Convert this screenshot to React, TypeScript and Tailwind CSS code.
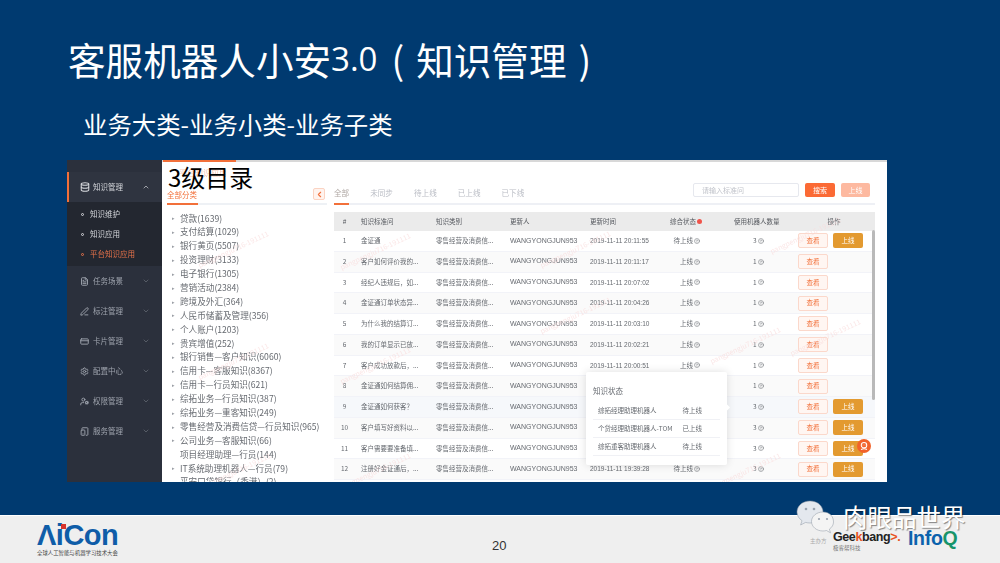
import React from "react"
import { ChevronUp, ChevronDown, ChevronLeft, Database, FileText, PenLine, CreditCard, Settings, UserCog, TabletSmartphone, CircleHelp } from "lucide-react"

const cjk = "font-['Noto_Sans_CJK_SC','Noto_Sans',sans-serif]"

const menus = [
    { name: "任务场景", icon: FileText },
    { name: "标注管理", icon: PenLine },
    { name: "卡片管理", icon: CreditCard },
    { name: "配置中心", icon: Settings },
    { name: "权限管理", icon: UserCog },
    { name: "服务管理", icon: TabletSmartphone },
]

const subMenus = ["知识维护", "知识应用", "平台知识应用"]

const tree = [
    "贷款(1639)", "支付结算(1029)", "银行黄页(5507)", "投资理财(3133)", "电子银行(1305)", "营销活动(2384)", "跨境及外汇(364)",
    "人民币储蓄及管理(356)", "个人账户(1203)", "贵宾增值(252)", "银行销售—客户知识(6060)", "信用卡—客服知识(8367)",
    "信用卡—行员知识(621)", "综拓业务—行员知识(387)", "综拓业务—重客知识(249)", "零售经营及消费信贷—行员知识(965)",
    "公司业务—客服知识(66)", "项目经理助理—行员(144)", "IT系统助理机器人—行员(79)", "平安口袋银行（香港）(2)",
]

const tabs = ["全部", "未同步", "待上线", "已上线", "已下线"]

const rows = [
    { q: "金证通", time: "20:11:55", status: "待上线", count: 3, online: true },
    { q: "客户如何评价我的...", time: "20:11:17", status: "上线", count: 1, online: false },
    { q: "经纪人违规后，如...", time: "20:07:02", status: "上线", count: 1, online: false },
    { q: "金证通订单状态异...", time: "20:04:26", status: "上线", count: 1, online: false },
    { q: "为什么我的结算订...", time: "20:03:10", status: "上线", count: 1, online: false },
    { q: "我的订单显示已放...", time: "20:02:21", status: "上线", count: 1, online: false },
    { q: "客户成功放款后，...", time: "20:00:51", status: "上线", count: 1, online: false },
    { q: "金证通如何结算佣...", time: "", status: "", count: 1, online: false },
    { q: "金证通如何获客？", time: "", status: "", count: 3, online: true },
    { q: "客户填写好资料以...", time: "", status: "", count: 3, online: true },
    { q: "客户需要要准备填...", time: "", status: "", count: 3, online: true },
    { q: "注册好金证通后，...", time: "19:39:28", status: "待上线", count: 3, online: true },
]

const robots = [
    { name: "综拓经理助理机器人", status: "待上线" },
    { name: "个贷经理助理机器人-TOM", status: "已上线" },
    { name: "综拓重客助理机器人", status: "待上线" },
]

const marks = [
    "left-[128px] top-[84px]", "left-[128px] top-[196px]", "left-[270px] top-[86px]", "left-[470px] top-[150px]",
    "left-[470px] top-[84px]", "left-[270px] top-[200px]", "left-[700px] top-[70px]", "left-[640px] top-[180px]",
    "left-[270px] top-[306px]", "left-[640px] top-[306px]", "left-[720px] top-[172px]", "left-[130px] top-[306px]",
]

const gridCols = "grid grid-cols-[21px_75px_75px_80px_79px_65px_64px_82px]"

function Sidebar(){
    return(
        <div className="flex w-[95px] shrink-0 flex-col bg-[#2b303c] pt-[12px] text-[7.5px] text-[#9ea3ad]">
            <div className="flex h-[30px] items-center border-l-2 border-[#f2703a] bg-[#2f3440] pl-[11px] pr-[12px] text-[#d5d7db]">
                <Database size={10} strokeWidth={2.5} />
                <span className="ml-[3px] flex-1">知识管理</span>
                <ChevronUp size={8} />
            </div>
            <div className="flex h-[64px] flex-col justify-around bg-[#232730] py-[2px] pl-[24px] text-[#d5d7db]">
                {subMenus.map((sub,i)=>(
                    <div key={'sub'+i} className={i === 2 ? "flex items-center text-[#e8734a]" : "flex items-center"}>
                        <span className={i === 2 ? "mr-[6px] -ml-[10px] size-[3px] rounded-full border border-[#e8734a]" : "mr-[6px] -ml-[10px] size-[3px] rounded-full border border-[#d5d7db]"}></span>
                        {sub}
                    </div>
                ))}
            </div>
            {menus.map((menu,i)=>{
                const Icon = menu.icon
                return(
                    <div key={'menu'+i} className="flex h-[30px] items-center pl-[13px] pr-[12px]">
                        <Icon size={9} strokeWidth={2.5} />
                        <span className="ml-[4px] flex-1">{menu.name}</span>
                        <ChevronDown size={8} className="text-[#6d727c]" />
                    </div>
                )
            })}
        </div>
    )
}

function TreePanel(){
    return(
        <div className="flex w-[171px] shrink-0 flex-col pl-[5px] pr-[6px]">
            <div className="flex h-[43px] items-end justify-between border-b-2 border-[#eef1f5]">
                <span className="-mb-[2px] border-b-2 border-[#f2703a] pb-[3px] pr-[1px] text-[7.5px] text-[#f2703a]">全部分类</span>
                <span className="mb-[3px] mr-[2px] flex size-[12px] items-center justify-center rounded-[2px] border border-[#fbd3c2] bg-[#fff3ee] text-[#f2703a]">
                    <ChevronLeft size={9} strokeWidth={3} />
                </span>
            </div>
            <div className="mt-[6px] flex h-[271px] flex-col overflow-hidden text-[8.6px] text-[#666a70]">
                {tree.map((item,i)=>(
                    <div key={'tree'+i} className="flex h-[13.9px] shrink-0 items-center whitespace-nowrap">
                        <span className="w-[13px] pl-[5px] text-[5px] text-[#9a9ea5]">{i === 17 || i === 19 ? "" : "▸"}</span>
                        {item}
                    </div>
                ))}
            </div>
        </div>
    )
}

function TopBar(){
    return(
        <div className="flex h-[43px] items-end justify-between border-b-2 border-[#eef0f5]">
            <div className="flex gap-[21px] text-[7.6px] text-[#b9bcc4]">
                {tabs.map((tab,i)=>(
                    <span key={'tab'+i} className={i === 0 ? "-mb-[2px] border-b-2 border-[#f2703a] pb-[5px] text-[#b0a8a4]" : "pb-[5px]"}>{tab}</span>
                ))}
            </div>
            <div className="mb-[6px] mr-[5px] flex items-center text-[7px]">
                <div className="flex h-[14px] w-[106px] items-center rounded-[2px] border border-[#e6e8ee] pl-[8px] text-[#c0c3ca]">请输入标准问</div>
                <div className="ml-[6px] flex h-[14px] w-[30px] items-center justify-center rounded-[2px] bg-[#fb6a35] text-white">搜索</div>
                <div className="ml-[6px] flex h-[14px] w-[29px] items-center justify-center rounded-[2px] bg-[#fdb9a0] text-white">上线</div>
            </div>
        </div>
    )
}

function KnowledgeTable(){
    return(
        <div className="mt-[7px] text-[6.5px] text-[#666a70]">
            <div className={gridCols + " h-[19px] items-center bg-[#ebebeb] text-[#55585e]"}>
                <span className="text-center">#</span>
                <span className="pl-[6px]">知识标准问</span>
                <span className="pl-[6px]">知识类别</span>
                <span className="pl-[5px]">更新人</span>
                <span className="pl-[5px]">更新时间</span>
                <span className="flex items-center gap-[1px] pl-[6px]">综合状态<span className="size-[5px] rounded-full bg-[#f0534a]"></span></span>
                <span className="pl-[5px]">使用机器人数量</span>
                <span className="text-center">操作</span>
            </div>
            {rows.map((row,i)=>(
                <div key={'row'+i} className={gridCols + (i === 8 ? " h-[20.75px] items-center border-b border-[#f2f3f8] bg-[#f6f8fb]" : i % 2 === 1 ? " h-[20.75px] items-center border-b border-[#f2f3f8] bg-[#fafafa]" : " h-[20.75px] items-center border-b border-[#f2f3f8]")}>
                    <span className="text-center">{i + 1}</span>
                    <span className="whitespace-nowrap pl-[6px]">{row.q}</span>
                    <span className="whitespace-nowrap pl-[6px]">零售经营及消费信...</span>
                    <span className="pl-[5px] font-['Liberation_Sans',sans-serif] text-[7px]">WANGYONGJUN953</span>
                    <span className="whitespace-nowrap pl-[5px] font-['Liberation_Sans',sans-serif] text-[6.5px]">{row.time ? "2019-11-11 " + row.time : ""}</span>
                    {row.status ?
                        <span className="flex items-center justify-end gap-[1px] pr-[29px]">{row.status}<CircleHelp size={6} /></span>
                    : <span></span>}
                    <span className="flex items-center gap-[1px] pl-[24px]">{row.count}<CircleHelp size={6} /></span>
                    <span className="flex items-center gap-[5px] pl-[5px]">
                        <span className="flex h-[15px] w-[30px] items-center justify-center rounded-[2px] border border-[#fbd8cb] bg-[#fff6f2] text-[#f2703a]">查看</span>
                        {row.online ? <span className="flex h-[15px] w-[30px] items-center justify-center rounded-[2px] bg-[#e39a30] text-white">上线</span> : null}
                    </span>
                </div>
            ))}
        </div>
    )
}

function StatusPopover(){
    return(
        <div className="absolute left-[519px] top-[212px] flex h-[93px] w-[141px] flex-col rounded-[2px] bg-white px-[7px] pt-[13px] text-[6.5px] text-[#666a70] shadow-[0_0_8px_rgba(0,0,0,0.13)] blur-[0.35px]">
            <span className="mb-[6px] text-[7.5px]">知识状态</span>
            {robots.map((robot,i)=>(
                <div key={'robot'+i} className="flex h-[18px] shrink-0 items-center justify-between border-b border-[#f0f1f5] pl-[5px] pr-[18px]">
                    <span>{robot.name}</span>
                    <span>{robot.status}</span>
                </div>
            ))}
            <span className="absolute -right-[2px] top-[33px] size-[5px] rotate-45 bg-white"></span>
        </div>
    )
}

function ScreenPanel(){
    return(
        <div className={"relative mx-[67px] flex h-[322px] w-[820px] shrink-0 overflow-hidden " + cjk}>
            <div className="flex flex-1 blur-[0.35px]">
                <Sidebar />
                <div className="flex flex-1 border-t-2 border-[#d8d8d8] bg-white">
                    <TreePanel />
                    <div className="flex-1 pl-[1px] pr-[12px]">
                        <TopBar />
                        <KnowledgeTable />
                    </div>
                </div>
            </div>
            <div className="absolute left-[96px] top-0 h-[2px] w-[73px] bg-[#f2703a]"></div>
            <div className="absolute left-[805px] top-[70px] h-[170px] w-[3px] rounded-full bg-[#b9b9b9]"></div>
            <div className="absolute left-[112px] top-[7px] text-[8px] text-[#f8c4b0] blur-[0.35px]">平台知识应用</div>
            <div className="absolute left-[101px] top-[0px] text-[24px] leading-[34px] text-black">3级目录</div>
            <StatusPopover />
            {marks.map((pos,i)=>(
                <span key={'mark'+i} className={"pointer-events-none absolute -rotate-[25deg] whitespace-nowrap text-[7px] text-[#f9dcdc] opacity-70 " + pos}>pangpengju716-191111</span>
            ))}
            <div className="absolute left-[790px] top-[279px] flex size-[14px] items-center justify-center rounded-full bg-[#f2622a]">
                <svg viewBox="0 0 14 14" className="size-[12px]" fill="none" stroke="#fff" strokeWidth="1.2">
                    <circle cx="7" cy="6" r="3.2" />
                    <path d="M5.500 5.800h.6M7.900 5.800h.6" />
                    <path d="M3.500 11c2-1 5-1 7 0" />
                </svg>
            </div>
        </div>
    )
}

function WechatMark(){
    return(
        <svg viewBox="0 0 40 36" className="absolute left-[796px] top-[500px] h-[36px] w-[40px]">
            <path d="M14 1C6.500 1 1 6 1 12c0 3.600 2 6.600 5 8.700L4.600 25l5-2.600c1.400.4 2.800.6 4.400.6 7.500 0 13-5 13-11S21.500 1 14 1z" fill="#e4e8ee" stroke="#8d96a3" strokeWidth=".5" />
            <path d="M27 12c-6.500 0-11.500 4.300-11.500 9.500S20.500 31 27 31c1.200 0 2.400-.2 3.500-.5l4 2.300-1.100-3.700c2.600-1.700 4.100-4.300 4.100-7.100C37.500 16.300 33.500 12 27 12z" fill="#f4f4f4" stroke="#8d96a3" strokeWidth=".5" />
            <circle cx="10" cy="9" r="1.300" fill="#9aa3af" />
            <circle cx="18" cy="9" r="1.300" fill="#9aa3af" />
            <circle cx="23" cy="19" r="1.100" fill="#9aa3af" />
            <circle cx="31" cy="19" r="1.100" fill="#9aa3af" />
        </svg>
    )
}

function Footer(){
    return(
        <div className="relative mt-auto flex h-[48px] items-center border-t border-[#ffffff] bg-[#efefef] pl-[37px]">
            <div className="flex w-[81px] flex-col items-start">
                <span className="relative font-['Liberation_Sans',sans-serif] text-[29px] font-bold leading-[27px] tracking-[-0.5px] text-[#0f5da8]">
                    ΛiCon
                    <span className="absolute left-[23.5px] top-[2.5px] size-[5px] bg-[#d8342c]"></span>
                </span>
                <span className={"whitespace-nowrap text-[5.4px] leading-[9px] text-[#444] " + cjk}>全球人工智能与机器学习技术大会</span>
            </div>
            <span className="absolute left-[492px] top-[22px] font-['Liberation_Sans',sans-serif] text-[13px] leading-[16px] text-[#333]">20</span>
            <span className={"absolute left-[810px] top-[21px] text-[5.5px] text-[#aaa] " + cjk}>主办方</span>
            <div className="absolute left-[833px] top-[14px] flex flex-col">
                <span className="font-['Liberation_Sans',sans-serif] text-[12.500px] font-bold leading-[15px] tracking-[-0.4px] text-[#222]">
                    Gee<span className="text-[#e8531f]">k</span>bang<span className="text-[#e8531f]">&gt;.</span>
                </span>
                <span className={"text-[5.5px] leading-[7px] text-[#777] " + cjk}>极客帮科技</span>
            </div>
            <span className="absolute left-[908px] top-[10px] font-['Liberation_Sans',sans-serif] text-[19.500px] font-bold leading-[24px] tracking-[-0.3px] text-[#0c62ad]">Info<span className="text-[#16946a]">Q</span></span>
        </div>
    )
}

export default function App(){
    return(
        <div className="relative flex h-[563px] w-[1000px] flex-col overflow-hidden bg-[#003a70]">
            <div className={"flex h-[160px] shrink-0 flex-col text-white " + cjk}>
                <div className="mt-[32px] flex h-[54px] items-center whitespace-nowrap pl-[68px] text-[37.6px]">
                    客服机器人小安<span className="font-['Open_Sans',sans-serif] text-[33px]">3.0</span>
                    <span className="ml-[14px] mr-[12px]">(</span>知识管理<span className="ml-[12px]">)</span>
                </div>
                <div className="pl-[83px] pt-[20px] text-[24.4px] leading-[36px]">业务大类-业务小类-业务子类</div>
            </div>
            <ScreenPanel />
            <Footer />
            <WechatMark />
            <span className={"absolute left-[843px] top-[500px] text-[24.500px] leading-[34px] text-white [text-shadow:1px_1px_1px_rgba(0,0,0,0.45)] " + cjk}>肉眼品世界</span>
        </div>
    )
}
